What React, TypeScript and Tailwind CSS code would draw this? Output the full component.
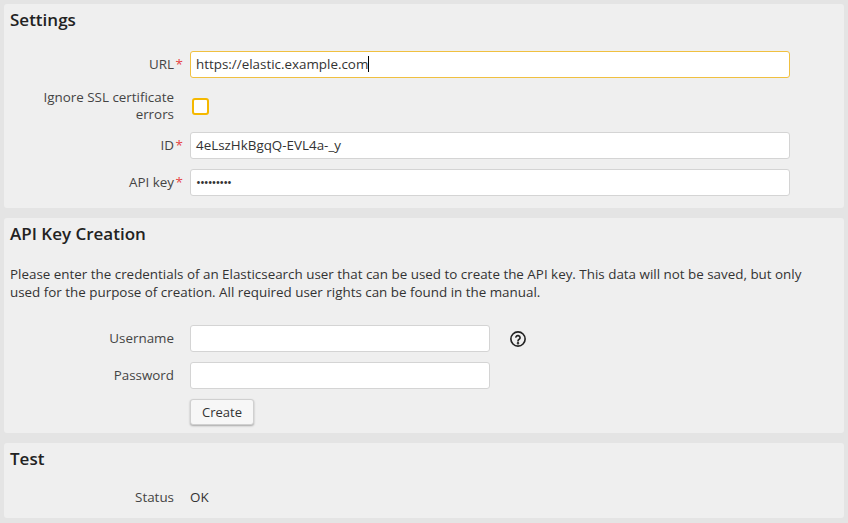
import React from "react";

const Label = ({ text, req }: { text: React.ReactNode; req?: boolean }) => (
  <div className="w-[164px] shrink-0 text-right text-[13.4px] leading-[17px] text-[#444] relative">
    {text}
    {req && <span className="absolute -right-[9px] top-0 text-[#e64545]">*</span>}
  </div>
);

export default function App() {
  return (
    <div className="w-[848px] h-[523px] bg-[#e4e4e4] p-1 flex flex-col gap-[10px] text-[#333]" style={{ fontFamily: '"Open Sans", sans-serif' }}>
      <div className="bg-[#efefef] rounded-[3px] h-[204px] pl-[6px] pt-[6px]">
        <div className="text-[17px] leading-[20px] font-semibold text-[#222]">Settings</div>
        <div className="mt-[21px] flex items-center gap-[16px]">
          <Label text="URL" req />
          <div className="w-[600px] h-[27px] bg-white border border-[#f0c040] rounded-[3px] px-[5px] text-[13.4px] leading-[25px]">https://elastic.example.com<span className="inline-block w-px h-[16px] bg-black align-middle -mt-[2px]" /></div>
        </div>
        <div className="mt-[11px] flex items-center gap-[16px]">
          <Label text={<>Ignore SSL certificate<br />errors</>} />
          <div className="ml-[2px] w-[17px] h-[17px] bg-white border-2 border-[#f5b800] rounded-[3px]" />
        </div>
        <div className="mt-[9px] flex items-center gap-[16px]">
          <Label text="ID" req />
          <div className="w-[600px] h-[27px] bg-white border border-[#d4d4d4] rounded-[3px] px-[5px] text-[13.4px] leading-[25px]">4eLszHkBgqQ-EVL4a-_y</div>
        </div>
        <div className="mt-[10px] flex items-center gap-[16px]">
          <Label text="API key" req />
          <div className="w-[600px] h-[27px] bg-white border border-[#d4d4d4] rounded-[3px] px-[5px] text-[13px] leading-[25px] tracking-[-1px]">•••••••••</div>
        </div>
      </div>
      <div className="bg-[#efefef] rounded-[3px] h-[215px] pl-[6px] pt-[6px]">
        <div className="text-[17px] leading-[20px] font-semibold text-[#222]">API Key Creation</div>
        <p className="mt-[21px] text-[13.4px] leading-[18px] text-[#333] pr-4">Please enter the credentials of an Elasticsearch user that can be used to create the API key. This data will not be saved, but only used for the purpose of creation. All required user rights can be found in the manual.</p>
        <div className="mt-[24px] flex items-center gap-[16px]">
          <Label text="Username" />
          <div className="w-[300px] h-[27px] bg-white border border-[#d4d4d4] rounded-[3px]" />
          <svg width="18" height="18" viewBox="0 0 24 24" className="ml-[3px]" fill="none" stroke="#222" strokeWidth="2.2">
            <circle cx="12" cy="12" r="9.5" />
            <path d="M9.2 9.3a2.9 2.9 0 0 1 5.6 1c0 2-2.8 2.4-2.8 4.2" strokeLinecap="round" />
            <circle cx="12" cy="17.6" r="0.6" fill="#222" />
          </svg>
        </div>
        <div className="mt-[10px] flex items-center gap-[16px]">
          <Label text="Password" />
          <div className="w-[300px] h-[27px] bg-white border border-[#d4d4d4] rounded-[3px]" />
        </div>
        <div className="mt-[10px] ml-[180px]">
          <div className="inline-block w-[64px] h-[26px] bg-[#f7f7f7] border border-[#d0d0d0] rounded-[3px] shadow-[0_1px_2px_rgba(0,0,0,0.3)] text-center text-[13px] leading-[24px] text-[#333]">Create</div>
        </div>
      </div>
      <div className="bg-[#efefef] rounded-[3px] h-[75px] pl-[6px] pt-[6px]">
        <div className="text-[17px] leading-[20px] font-semibold text-[#222]">Test</div>
        <div className="mt-[20px] flex items-center gap-[16px]">
          <Label text="Status" />
          <div className="text-[13.4px] leading-[17px] text-[#333]">OK</div>
        </div>
      </div>
    </div>
  );
}
